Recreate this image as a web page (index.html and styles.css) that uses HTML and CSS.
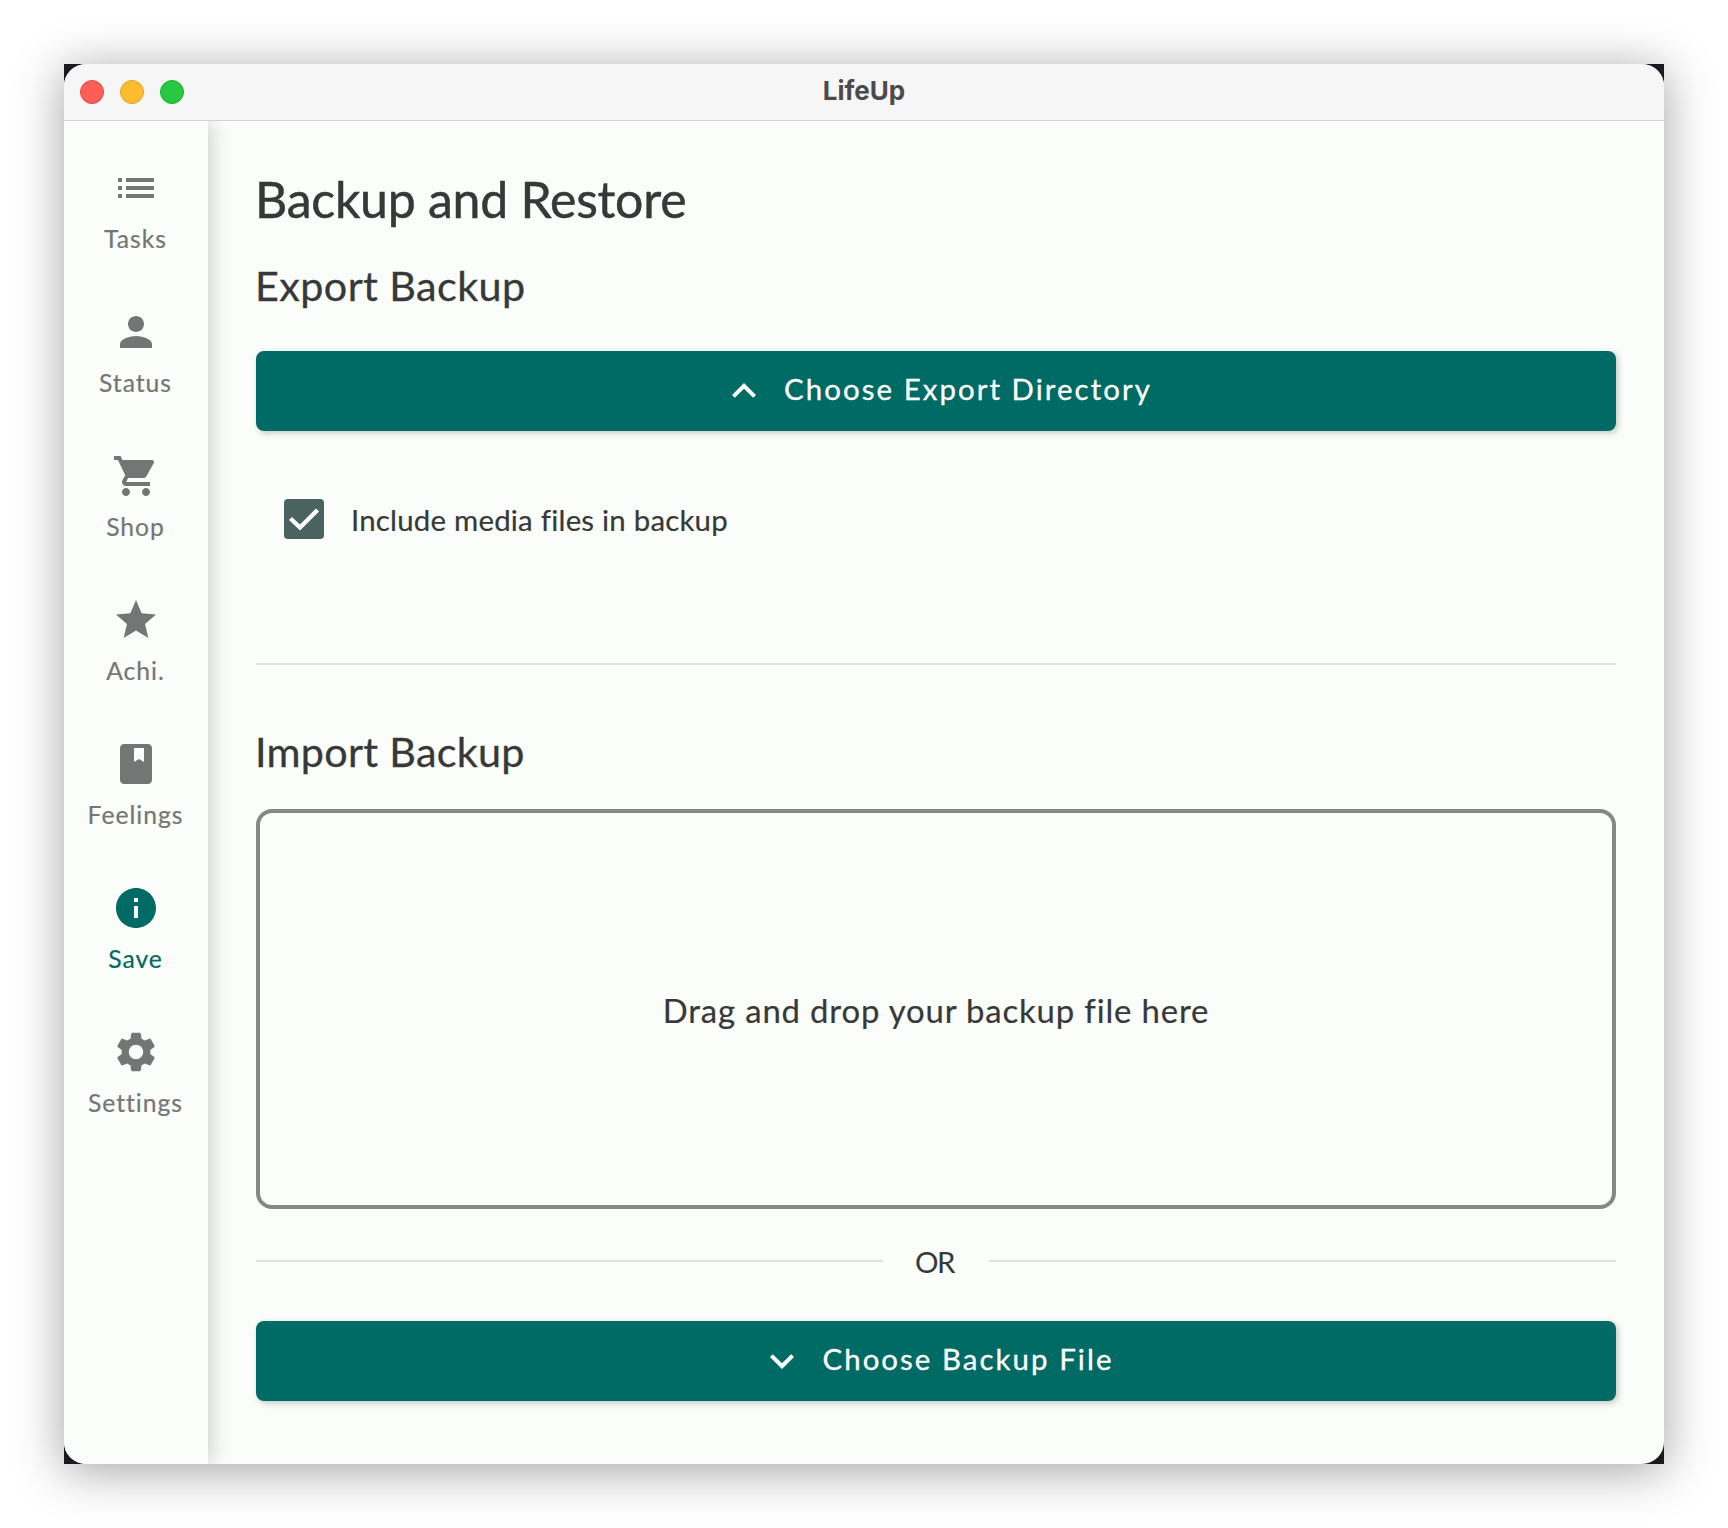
FILE: index.html
```html
<!DOCTYPE html>
<html lang="en">
<head>
<meta charset="utf-8">
<title>LifeUp</title>
<link rel="stylesheet" href="styles.css">
</head>
<body>
<div class="backdrop">
  <div class="window">
    <header class="titlebar">
      <div class="lights">
        <span class="light light-close"></span>
        <span class="light light-min"></span>
        <span class="light light-max"></span>
      </div>
      <div class="title">LifeUp</div>
    </header>
    <div class="body">
      <nav class="sidebar">
        <a class="item">
          <svg class="icon" viewBox="0 0 24 24"><path d="M3 13h2v-2H3v2zm0 4h2v-2H3v2zm0-8h2V7H3v2zm4 4h14v-2H7v2zm0 4h14v-2H7v2zM7 7v2h14V7H7z"/></svg>
          <span class="label">Tasks</span>
        </a>
        <a class="item">
          <svg class="icon" viewBox="0 0 24 24"><path d="M12 12c2.21 0 4-1.79 4-4s-1.790-4-4-4-4 1.790-4 4 1.790 4 4 4zm0 2c-2.670 0-8 1.340-8 4v2h16v-2c0-2.660-5.330-4-8-4z"/></svg>
          <span class="label">Status</span>
        </a>
        <a class="item">
          <svg class="icon" viewBox="0 0 24 24"><path d="M7 18c-1.100 0-1.990.9-1.990 2S5.900 22 7 22s2-.9 2-2-.9-2-2-2zM1 2v2h2l3.600 7.590-1.350 2.450c-.16.28-.25.61-.25.96 0 1.100.9 2 2 2h12v-2H7.420c-.14 0-.25-.11-.25-.25l.03-.12.9-1.630h7.450c.75 0 1.410-.41 1.750-1.030l3.580-6.490c.08-.14.12-.31.12-.48 0-.55-.45-1-1-1H5.210l-.94-2H1zm16 16c-1.100 0-1.990.9-1.990 2s.89 2 1.990 2 2-.9 2-2-.9-2-2-2z"/></svg>
          <span class="label">Shop</span>
        </a>
        <a class="item">
          <svg class="icon" viewBox="0 0 24 24"><path d="M12 17.270 18.180 21l-1.640-7.030L22 9.240l-7.190-.61L12 2 9.190 8.630 2 9.240l5.460 4.730L5.820 21z"/></svg>
          <span class="label">Achi.</span>
        </a>
        <a class="item">
          <svg class="icon" viewBox="0 0 24 24"><path d="M18 2H6c-1.100 0-2 .9-2 2v16c0 1.100.9 2 2 2h12c1.100 0 2-.9 2-2V4c0-1.100-.9-2-2-2z"/><path class="mark" d="M11 4h5v7l-2.500-1.500L11 11z"/></svg>
          <span class="label">Feelings</span>
        </a>
        <a class="item item-active">
          <svg class="icon" viewBox="0 0 24 24"><path d="M12 2C6.480 2 2 6.480 2 12s4.480 10 10 10 10-4.480 10-10S17.520 2 12 2zm1 15h-2v-6h2v6zm0-8h-2V7h2v2z"/></svg>
          <span class="label">Save</span>
        </a>
        <a class="item">
          <svg class="icon" viewBox="0 0 24 24"><path d="M19.140 12.940c.04-.3.06-.61.06-.94 0-.32-.02-.64-.07-.94l2.030-1.580c.18-.14.23-.41.12-.61l-1.920-3.320c-.12-.22-.37-.29-.59-.22l-2.390.96c-.5-.38-1.030-.7-1.620-.94l-.36-2.540c-.04-.24-.24-.41-.48-.41h-3.840c-.24 0-.43.17-.47.41l-.36 2.540c-.59.24-1.130.57-1.620.94l-2.390-.96c-.22-.08-.47 0-.59.22L2.740 8.870c-.12.21-.08.47.12.61l2.030 1.580c-.05.3-.09.63-.09.94s.02.64.07.94l-2.030 1.580c-.18.14-.23.41-.12.61l1.920 3.320c.12.22.37.29.59.22l2.390-.96c.5.38 1.030.7 1.620.94l.36 2.540c.05.24.24.41.48.41h3.840c.24 0 .44-.17.47-.41l.36-2.540c.59-.24 1.130-.56 1.620-.94l2.390.96c.22.08.47 0 .59-.22l1.920-3.320c.12-.22.07-.47-.12-.61l-2.010-1.580zM12 15.600c-1.980 0-3.600-1.620-3.600-3.600s1.620-3.600 3.600-3.600 3.600 1.620 3.600 3.600-1.620 3.600-3.600 3.600z"/></svg>
          <span class="label">Settings</span>
        </a>
      </nav>
      <main class="content">
        <h1 class="page-title">Backup and Restore</h1>
        <h2 class="section-title">Export Backup</h2>
        <button class="button export-button">
          <svg class="icon" viewBox="0 0 24 24"><path d="m12 8-6 6 1.410 1.410L12 10.830l4.590 4.580L18 14z"/></svg>
          <span class="button-text">Choose Export Directory</span>
        </button>
        <div class="option">
          <span class="checkbox"><svg class="check" viewBox="0 0 40 40"><path d="M6.500 19.500 16 28.500 33.500 11"/></svg></span>
          <span class="option-text">Include media files in backup</span>
        </div>
        <div class="divider"></div>
        <h2 class="section-title import-title">Import Backup</h2>
        <div class="dropzone">Drag and drop your backup file here</div>
        <div class="or"><span class="or-line"></span><span class="or-text">OR</span><span class="or-line"></span></div>
        <button class="button import-button">
          <svg class="icon" viewBox="0 0 24 24"><path d="M16.590 8.590 12 13.170 7.410 8.590 6 10l6 6 6-6z"/></svg>
          <span class="button-text">Choose Backup File</span>
        </button>
      </main>
    </div>
  </div>
</div>
</body>
</html>
```
FILE: styles.css
```css
* {
  box-sizing: border-box;
}

body {
  margin: 0;
  padding: 64px;
  background: #fff;
  color: #363938;
  font-family: Lato, "Liberation Sans", sans-serif;
}

.backdrop {
  width: 1600px;
  height: 1400px;
  background: #181a1f;
  box-shadow: 0 6px 46px rgba(0, 0, 0, 0.37);
}

.window {
  display: flex;
  flex-direction: column;
  height: 100%;
  overflow: hidden;
  border-radius: 22px;
  background: #fbfdfa;
}

.titlebar {
  display: grid;
  grid-template-columns: 1fr auto 1fr;
  align-items: center;
  height: 57px;
  padding: 0 16px;
  border-bottom: 1px solid #d2d3d2;
  background: #f6f6f6;
}

.lights {
  display: flex;
  gap: 16px;
}

.light {
  width: 24px;
  height: 24px;
  border: 1px solid;
  border-radius: 50%;
}

.light-close {
  border-color: #e2463f;
  background: #ff5f57;
}

.light-min {
  border-color: #e0a023;
  background: #febc2e;
}

.light-max {
  border-color: #1dad2b;
  background: #28c840;
}

.title {
  padding-bottom: 2px;
  color: #4b4b4b;
  font: bold 26px/32px Inter, sans-serif;
}

.body {
  display: flex;
  flex: 1;
  overflow: hidden;
}

.sidebar {
  width: 144px;
  padding-top: 43px;
  background: #fbfdfa;
  box-shadow: 2px 0 20px rgba(20, 40, 40, 0.22);
}

.item {
  display: flex;
  flex-direction: column;
  align-items: center;
  gap: 12px;
  height: 144px;
  color: #747675;
}

.item-active {
  color: #006a64;
}

.icon {
  width: 48px;
  height: 48px;
  fill: currentColor;
}

.mark {
  fill: #fbfdfa;
}

.label {
  margin-left: -1px;
  font-size: 24.7px;
  line-height: 30px;
  letter-spacing: 0.98px;
  -webkit-text-stroke: 0.2px currentColor;
}

.content {
  display: flex;
  flex: 1;
  flex-direction: column;
  padding: 48px 48px 0;
}

.page-title {
  margin: 0 0 31px -1px;
  font-size: 50px;
  font-weight: 400;
  line-height: 60px;
  letter-spacing: -0.25px;
  -webkit-text-stroke: 0.5px currentColor;
}

.section-title {
  margin: 0 0 0 -1px;
  font-size: 41.3px;
  font-weight: 400;
  line-height: 50px;
  letter-spacing: 0.42px;
  -webkit-text-stroke: 0.3px currentColor;
}

.button {
  display: flex;
  align-items: center;
  justify-content: center;
  gap: 16px;
  height: 80px;
  padding: 0;
  border: 0;
  border-radius: 8px;
  background: #006a64;
  box-shadow: 2px 2px 6px rgba(0, 0, 0, 0.22);
  color: #fff;
  font: 29.4px/40px Lato, "Liberation Sans", sans-serif;
}

.button-text {
  margin-bottom: 5px;
  letter-spacing: 2.06px;
  -webkit-text-stroke: 0.3px currentColor;
}

.export-button {
  margin-top: 41px;
}

.option {
  display: flex;
  gap: 27px;
  margin: 68px 0 124px;
  padding-left: 28px;
}

.checkbox {
  width: 40px;
  height: 40px;
  border-radius: 4px;
  background: #4a635f;
}

.check {
  display: block;
  fill: none;
  stroke: #fbfdfa;
  stroke-width: 4.4;
}

.option-text {
  margin-bottom: -1px;
  padding-top: 1px;
  font-size: 29.4px;
  line-height: 40px;
  letter-spacing: 0.22px;
  -webkit-text-stroke: 0.2px currentColor;
}

.divider {
  height: 2px;
  background: #dfe1de;
}

.import-title {
  margin: 61px 0 33px -1px;
  letter-spacing: 0.29px;
}

.dropzone {
  display: flex;
  align-items: center;
  justify-content: center;
  height: 400px;
  padding-top: 2px;
  border: 4px solid #868886;
  border-radius: 16px;
  font-size: 32.9px;
  letter-spacing: 0.84px;
  -webkit-text-stroke: 0.2px currentColor;
}

.or {
  display: flex;
  align-items: center;
  height: 40px;
  margin: 32px 0 40px;
}

.or-line {
  flex: 1;
  height: 2px;
  background: #dfe1de;
}

.or-text {
  width: 106px;
  padding: 2px 3px 0 0;
  font-size: 29.4px;
  line-height: 40px;
  letter-spacing: -1.5px;
  text-align: center;
}
```
